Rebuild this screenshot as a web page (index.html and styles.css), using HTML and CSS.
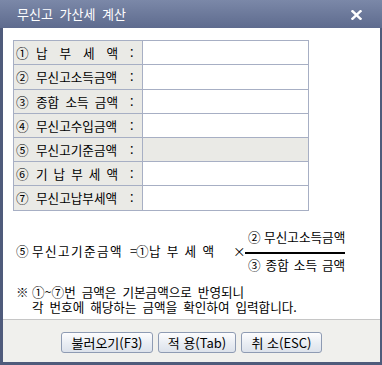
FILE: index.html
```html
<!DOCTYPE html>
<html lang="ko">
<head>
<meta charset="utf-8">
<title>무신고 가산세 계산</title>
<link rel="stylesheet" href="styles.css">
</head>
<body>
<div class="window">
  <div class="titlebar">
    <span class="title">무신고 가산세 계산</span>
    <svg class="close" width="11" height="10" viewBox="0 0 11 10"><path d="M1.5 1.2 L9.5 8.8 M9.5 1.2 L1.5 8.8" stroke="#fff" stroke-width="2.4" stroke-linecap="square"/></svg>
  </div>
  <div class="body">
    <div class="content">
      <div class="grid">
        <div class="row"><div class="label"><span class="n">①</span><span class="t">납 부 세 액</span><span class="c">:</span></div><div class="value"></div></div>
        <div class="row tall"><div class="label"><span class="n">②</span><span class="t">무신고소득금액</span><span class="c">:</span></div><div class="value"></div></div>
        <div class="row"><div class="label"><span class="n">③</span><span class="t">종합 소득 금액</span><span class="c">:</span></div><div class="value"></div></div>
        <div class="row"><div class="label"><span class="n">④</span><span class="t">무신고수입금액</span><span class="c">:</span></div><div class="value"></div></div>
        <div class="row"><div class="label"><span class="n">⑤</span><span class="t">무신고기준금액</span><span class="c">:</span></div><div class="value gray"></div></div>
        <div class="row"><div class="label"><span class="n">⑥</span><span class="t">기 납 부 세 액</span><span class="c">:</span></div><div class="value"></div></div>
        <div class="row tall"><div class="label"><span class="n">⑦</span><span class="t">무신고납부세액</span><span class="c">:</span></div><div class="value"></div></div>
      </div>
      <div class="formula">
        <span class="f-n">⑤</span><span class="f-name">무신고기준금액</span><span class="f-eq">=</span><span class="f-n1">①</span><span class="f-just">납 부 세 액</span><span class="f-x">×</span>
        <span class="fraction">
          <span class="num">② 무신고소득금액</span>
          <span class="bar"></span>
          <span class="den">③ 종합 소득 금액</span>
        </span>
      </div>
      <div class="note">
        <span class="mark">※</span>
        <span class="note-text">①~⑦번 금액은 기본금액으로 반영되니<br>각 번호에 해당하는 금액을 확인하여 입력합니다.</span>
      </div>
    </div>
    <div class="footer">
      <button class="btn b1">불러오기(F3)</button>
      <button class="btn b2">적 용(Tab)</button>
      <button class="btn b3">취 소(ESC)</button>
    </div>
  </div>
</div>
</body>
</html>
```

FILE: styles.css
```css
* { box-sizing: border-box; }
html, body { margin: 0; padding: 0; background: #fff; }
body {
  font-family: "Noto Sans CJK KR", "Noto Sans", sans-serif;
  font-size: 12.6px;
  color: #000;
}
.window {
  width: 382px;
  height: 365px;
  background: #4f5b7b;
  display: flex;
  flex-direction: column;
}
.titlebar {
  height: 28px;
  background: linear-gradient(#7b88a8, #5e6b8e);
  display: flex;
  align-items: center;
  justify-content: space-between;
  padding: 0 20px 0 17px;
  color: #fff;
}
.title {
  font-size: 13px;
  line-height: 18px;
  word-spacing: 3px;
}
.close { display: block; margin-top: 1px; }
.body {
  margin: 0 2px 3px 3px;
  background: #fff;
  flex: 1;
  display: flex;
  flex-direction: column;
}
.content {
  height: 291px;
  padding: 12px 0 0 10px;
}
.grid {
  width: 296px;
  border: 1px solid #a7afc4;
  border-top: 0;
}
.row {
  display: flex;
  height: 24px;
  border-top: 1px solid #a7afc4;
}
.row.tall { height: 25px; }
.label {
  width: 129px;
  border-right: 1px solid #a7afc4;
  background: #eaeae6;
  display: flex;
  align-items: center;
  padding-left: 2px;
  line-height: 16px;
  white-space: nowrap;
}
.n { width: 20px; }
.t {
  width: 82px;
  text-align: justify;
  text-align-last: justify;
}
.c { margin-left: 12px; }
.value { flex: 1; }
.value.gray { background: #eaeae6; }

.formula {
  display: flex;
  align-items: center;
  margin-top: 19px;
  padding-left: 3px;
  line-height: 14px;
  white-space: nowrap;
}
.f-n { width: 16px; }
.f-name { width: 98px; letter-spacing: 1.4px; }
.f-eq { width: 6px; }
.f-n1 { width: 13px; }
.f-just {
  width: 65px;
  text-align: justify;
  text-align-last: justify;
}
.f-x { width: 12px; margin-left: 19px; }
.fraction {
  display: flex;
  flex-direction: column;
  width: 100px;
}
.num { padding: 0 0 8px 3px; }
.bar { height: 2px; background: #000; }
.den { padding: 4px 0 0 3px; word-spacing: 1.5px; }

.note {
  display: flex;
  margin-top: 12px;
  padding-left: 3px;
  line-height: 15px;
  word-spacing: 2.4px;
  white-space: nowrap;
}
.mark { width: 16px; }

.footer {
  flex: 1;
  background: #f0f0ed;
  border-top: 1px solid #c6c6c6;
  display: flex;
  justify-content: center;
  align-items: flex-start;
  gap: 5px;
  padding-top: 12px;
}
.btn {
  font-family: inherit;
  font-size: 13px;
  color: #000;
  height: 21px;
  line-height: 16px;
  padding: 0;
  border: 1px solid #8e9bb3;
  border-radius: 3px;
  background: linear-gradient(#fdfdfe, #e9edf3 55%, #dce2eb);
}
.b1 { width: 92px; }
.b2 { width: 78px; }
.b3 { width: 81px; }
```
